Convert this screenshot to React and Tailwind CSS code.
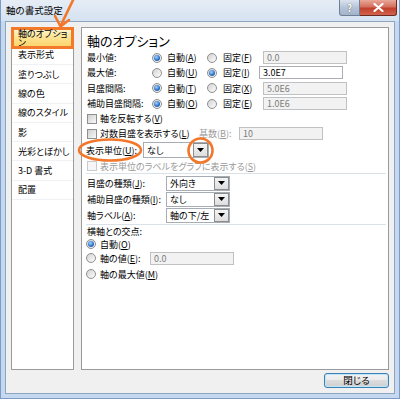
import React from 'react';

const FONT = "font-['Noto_Sans_CJK_JP',sans-serif] [font-feature-settings:'palt']";

function Radio({ checked }) {
  return (
    <span className="w-[10px] h-[10px] shrink-0 rounded-full border border-[#8e8f8f] bg-[linear-gradient(135deg,#d2d2d2,#fdfdfd)] flex items-center justify-center">
      {checked && (
        <span className="w-[6px] h-[6px] rounded-full bg-[radial-gradient(circle_at_40%_35%,#a6d6ff_0%,#2f74c8_55%,#0d3f88_100%)]" />
      )}
    </span>
  );
}

function Check({ disabled }) {
  return disabled ? (
    <span className="w-[10px] h-[10px] shrink-0 border border-[#cacaca] bg-[#f6f6f6]" />
  ) : (
    <span className="w-[10px] h-[10px] shrink-0 border border-[#8e8f8f] bg-[linear-gradient(135deg,#d0d0d0,#f9f9f9)]" />
  );
}

function Field({ value, disabled, className }) {
  return disabled ? (
    <div className={`h-[13px] border border-[#bfc1c4] bg-[#f2f2f2] text-[#7c7c7c] text-[9px] leading-[11px] pl-[3px] ${className}`}>
      {value}
    </div>
  ) : (
    <div className={`h-[13px] border border-[#abadb3] bg-white text-black text-[9px] leading-[11px] pl-[3px] ${className}`}>
      {value}
    </div>
  );
}

function Combo({ value, className }) {
  return (
    <div className={`border border-[#a7adb5] bg-white flex items-stretch ${className}`}>
      <span className="flex-1 pl-[3px] text-[9px] leading-none flex items-center">{value}</span>
      <span className="w-[15px] border border-[#8d8d8d] bg-[linear-gradient(#f4f4f4,#dedede)] flex items-center justify-center">
        <svg width="7" height="4" viewBox="0 0 7 4">
          <path d="M0 0H7L3.5 4Z" fill="#000" />
        </svg>
      </span>
    </div>
  );
}

function U({ children }) {
  return <span className="underline underline-offset-[1px]">{children}</span>;
}

function AxisRow({ h, label, auto, autoChecked, fix, fixW, value }) {
  return (
    <div className={`${h} flex items-center text-[9px] leading-none`}>
      <span className="w-[65px]">{label}</span>
      <Radio checked={autoChecked} />
      <span className="ml-[5px] w-[40px]">{auto}</span>
      <Radio checked={!autoChecked} />
      <span className={`ml-[6px] ${fixW}`}>{fix}</span>
      <Field value={value} disabled={autoChecked} className="w-[84px]" />
    </div>
  );
}

const items = ['表示形式', '塗りつぶし', '線の色', '線のスタイル', '影', '光彩とぼかし', '3-D 書式', '配置'];

export default function App() {
  return (
    <div className={`w-[400px] h-[399px] relative overflow-hidden bg-[#c4d8ef] border-l border-r border-b border-[#7d9bc4] text-black ${FONT}`}>
      {/* title bar */}
      <div className="h-[21px] flex justify-between bg-[linear-gradient(#e6edf6,#d5e2f1)]">
        <div className="pl-[5px] pt-[4px] text-[9.5px] leading-[12px]">軸の書式設定</div>
        <div className="flex mr-[2px] items-start">
          <div className="w-[21px] h-[16px] rounded-bl-[3px] border border-t-0 border-[#6f7f95] bg-[linear-gradient(#dbe4ef,#b5c3d6_50%,#a2b3ca)] flex items-center justify-center text-[10px] font-bold text-white leading-none [text-shadow:0_0_1px_#333]">
            ?
          </div>
          <div className="w-[37px] h-[16px] rounded-br-[3px] border border-t-0 border-l-0 border-[#6b2a22] bg-[linear-gradient(#e9a899,#d4705e_45%,#c1402c_55%,#d2634c)] flex items-center justify-center">
            <svg width="11" height="9" viewBox="0 0 11 9">
              <path d="M1.5 1L9.5 8M9.5 1L1.5 8" stroke="#fff" strokeWidth="2.2" strokeLinecap="round" />
            </svg>
          </div>
        </div>
      </div>

      {/* client area */}
      <div className="ml-[4px] w-[390px] h-[373px] bg-[#f0f0f0] border border-[#8fa5c2] flex flex-col px-[5px] pt-[5px]">
        <div className="flex gap-[7px] h-[343px]">
          {/* left list */}
          <div className="w-[63px] h-full border border-[#9b9b9b] bg-white flex flex-col">
            <div className="-mx-px -mt-px h-[22px] -mb-[3.3px] relative z-10 border-[3px] border-[#f37a2a] bg-[linear-gradient(#fff4c8,#fde38f_50%,#fcd56e)] pl-[4px] flex items-center text-[9px] leading-none">
              軸のオプション
            </div>
            {items.map((t) => (
              <div key={t} className="h-[19.3px] shrink-0 border-b border-[#f0f1f3] pl-[6px] flex items-center text-[9px] leading-none">
                {t}
              </div>
            ))}
          </div>

          {/* right panel */}
          <div className="w-[308px] h-full border border-[#9b9b9b] bg-white flex flex-col pl-[5px]">
            <div className="h-[22px] pt-[6px] text-[13px] leading-[13px]">軸のオプション</div>
            <AxisRow h="h-[15px]" label="最小値:" auto={<>自動(<U>A</U>)</>} autoChecked fix={<>固定(<U>F</U>)</>} fixW="w-[40px]" value="0.0" />
            <AxisRow h="h-[15px]" label="最大値:" auto={<>自動(<U>U</U>)</>} autoChecked={false} fix={<>固定(<U>I</U>)</>} fixW="w-[36px]" value="3.0E7" />
            <AxisRow h="h-[16px]" label="目盛間隔:" auto={<>自動(<U>T</U>)</>} autoChecked fix={<>固定(<U>X</U>)</>} fixW="w-[40px]" value="5.0E6" />
            <AxisRow h="h-[15px]" label="補助目盛間隔:" auto={<>自動(<U>O</U>)</>} autoChecked fix={<>固定(<U>E</U>)</>} fixW="w-[40px]" value="1.0E6" />

            <div className="h-[15px] flex items-center text-[9px] leading-none">
              <Check />
              <span className="ml-[3px]">軸を反転する(<U>V</U>)</span>
            </div>
            <div className="h-[15px] flex items-center text-[9px] leading-none">
              <Check />
              <span className="ml-[3px] w-[99px]">対数目盛を表示する(<U>L</U>)</span>
              <span className="w-[40px] text-[#9a9a9a]">基数(<U>B</U>):</span>
              <Field value="10" disabled className="w-[84px]" />
            </div>
            <div className="h-[18px] flex items-center text-[9px] leading-none">
              <span className="-ml-px w-[57px]">表示単位(<U>U</U>):</span>
              <Combo value="なし" className="w-[66px] h-[16px]" />
            </div>
            <div className="h-[14px] flex items-center text-[9px] leading-none text-[#9a9a9a]">
              <Check disabled />
              <span className="ml-[3px]">表示単位のラベルをグラフに表示する(<U>S</U>)</span>
            </div>

            <div className="h-px ml-[-1px] mr-[2px] bg-[#d9e2e8]" />
            <div className="h-px" />

            <div className="h-[16px] flex items-center text-[9px] leading-none">
              <span className="w-[79px]">目盛の種類(<U>J</U>):</span>
              <Combo value="外向き" className="w-[64px] h-[15px]" />
            </div>
            <div className="h-[16px] flex items-center text-[9px] leading-none">
              <span className="w-[79px]">補助目盛の種類(<U>I</U>):</span>
              <Combo value="なし" className="w-[64px] h-[15px]" />
            </div>
            <div className="h-[16px] flex items-center text-[9px] leading-none">
              <span className="w-[79px]">軸ラベル(<U>A</U>):</span>
              <Combo value="軸の下/左" className="w-[64px] h-[15px]" />
            </div>

            <div className="h-px" />
            <div className="h-px ml-[-1px] mr-[2px] bg-[#d9e2e8]" />

            <div className="h-[13px] flex items-center text-[9px] leading-none">横軸との交点:</div>
            <div className="h-[12px] flex items-center text-[9px] leading-none">
              <span className="-ml-px"><Radio checked /></span>
              <span className="ml-[4px]">自動(<U>O</U>)</span>
            </div>
            <div className="h-[16px] flex items-center text-[9px] leading-none">
              <span className="-ml-px"><Radio /></span>
              <span className="ml-[4px] w-[50px]">軸の値(<U>E</U>):</span>
              <Field value="0.0" disabled className="w-[84px]" />
            </div>
            <div className="h-[16px] flex items-center text-[9px] leading-none">
              <span className="-ml-px"><Radio /></span>
              <span className="ml-[4px]">軸の最大値(<U>M</U>)</span>
            </div>
          </div>
        </div>

        <div className="mt-[3px] flex justify-end">
          <div className="w-[65px] h-[15px] rounded-[3px] border border-[#3c7fb1] bg-[linear-gradient(#f3f3f3,#ebebeb_45%,#dcdcdc_50%,#cfcfcf)] shadow-[inset_0_0_0_1px_#bfe6fb] flex items-center justify-center text-[9.5px] leading-none">
            閉じる
          </div>
        </div>
      </div>

      {/* annotations */}
      <svg className="absolute left-0 top-0 pointer-events-none" width="400" height="399" viewBox="0 0 400 399">
        <g fill="none" stroke="#f2772a" strokeWidth="2.6" strokeLinecap="round" strokeLinejoin="round">
          <path d="M73 -2L60 25" />
          <path d="M54 16L59.5 26.5L68 20" />
          <ellipse cx="109" cy="150" rx="31" ry="10.5" />
          <ellipse cx="199.5" cy="150.5" rx="12" ry="12" />
        </g>
      </svg>
    </div>
  );
}
